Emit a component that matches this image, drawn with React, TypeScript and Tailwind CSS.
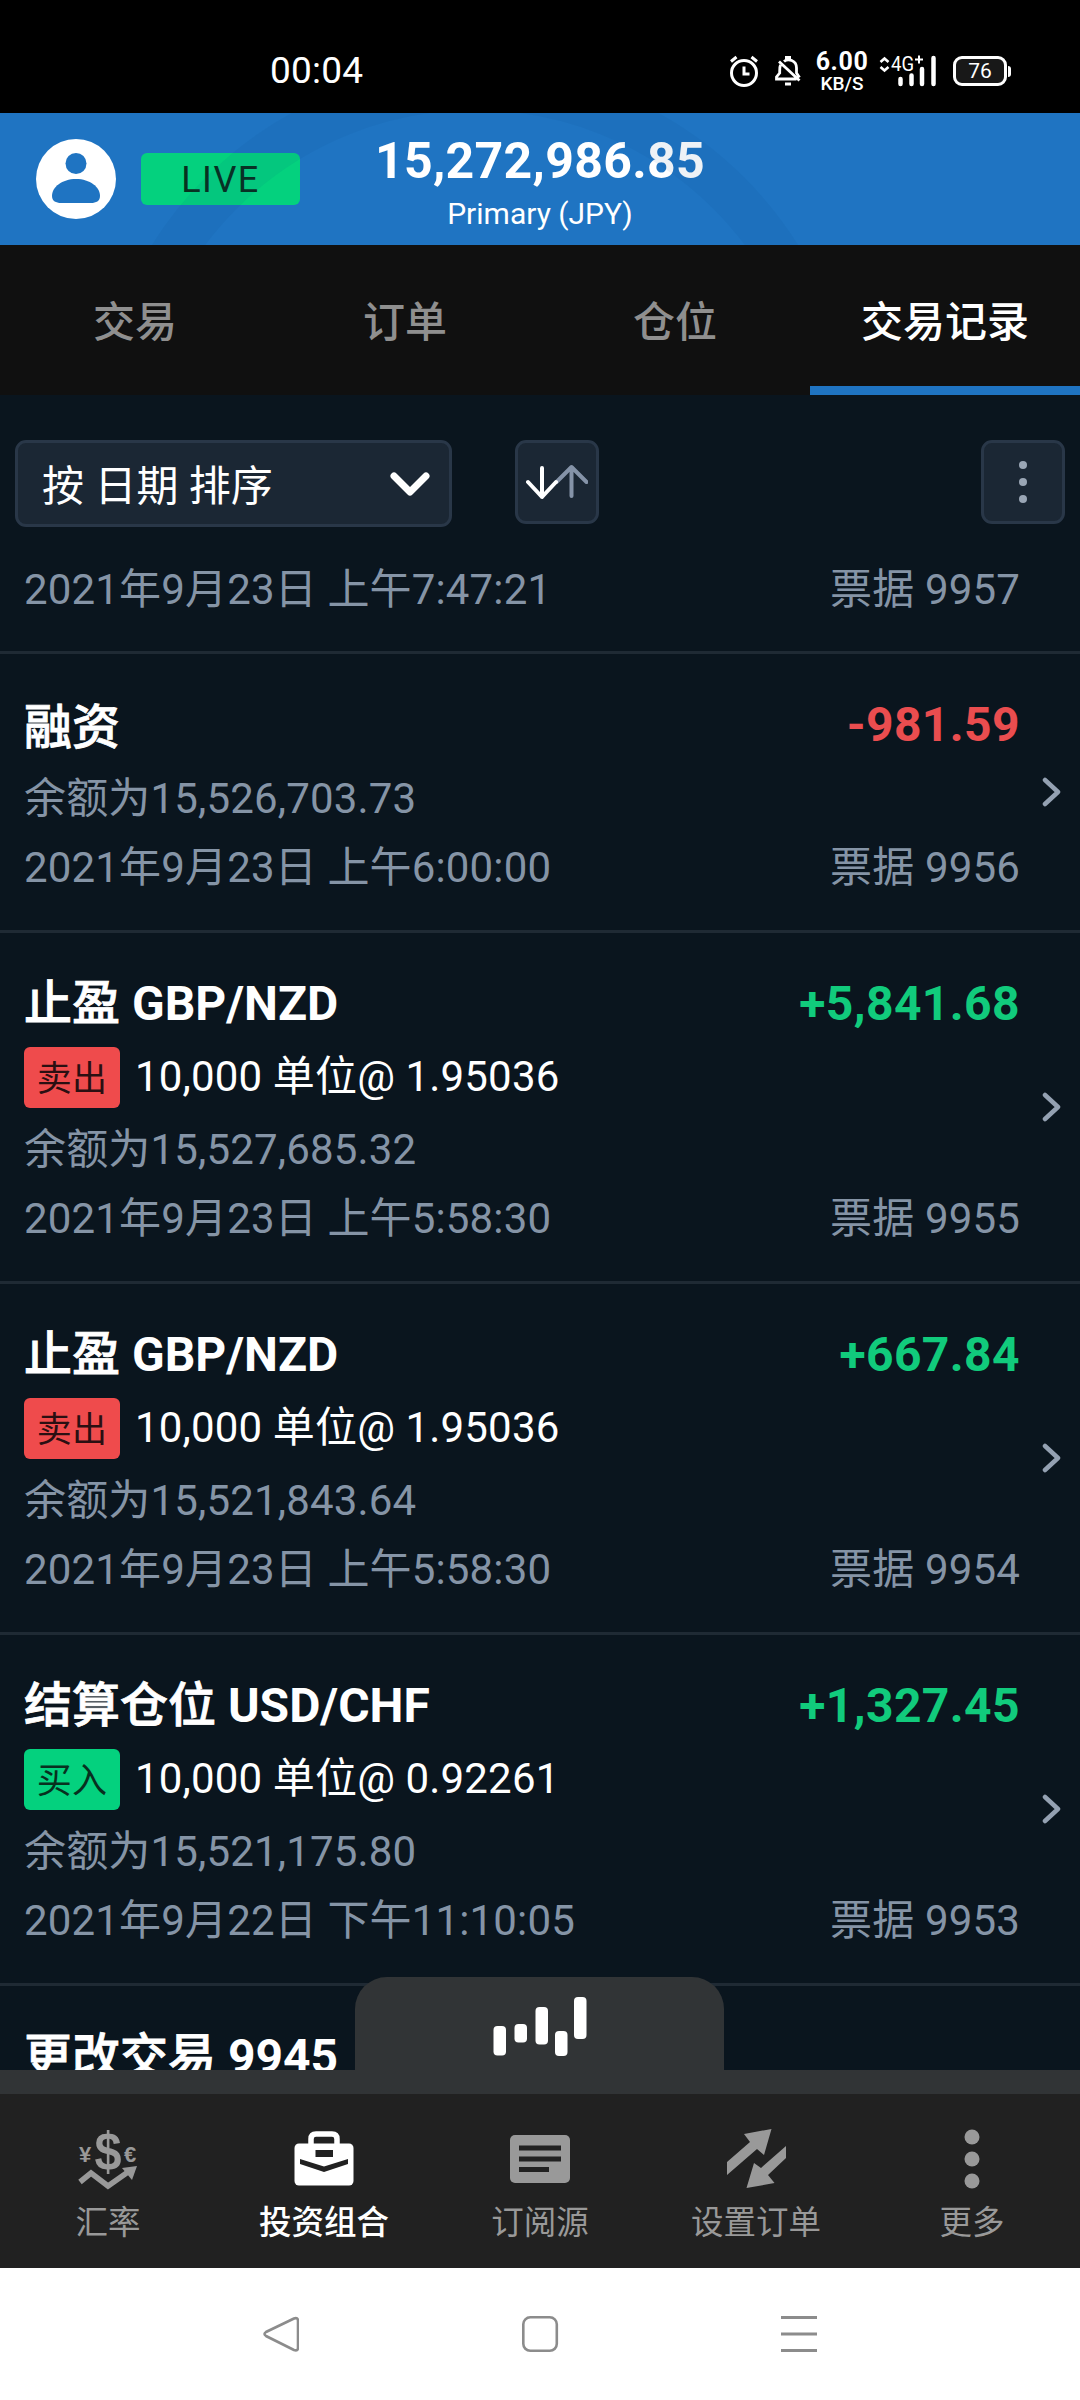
import type { ReactNode } from "react";

type Trade = {
  name: string;
  pair?: string;
  amount: string;
  side?: "buy" | "sell";
  detail?: string;
  balance: string;
  date: string;
  ticket: string;
};

const trades: Trade[] = [
  {
    name: "融资",
    amount: "-981.59",
    balance: "余额为15,526,703.73",
    date: "2021年9月23日 上午6:00:00",
    ticket: "票据 9956",
  },
  {
    name: "止盈",
    pair: "GBP/NZD",
    amount: "+5,841.68",
    side: "sell",
    detail: "10,000 单位@ 1.95036",
    balance: "余额为15,527,685.32",
    date: "2021年9月23日 上午5:58:30",
    ticket: "票据 9955",
  },
  {
    name: "止盈",
    pair: "GBP/NZD",
    amount: "+667.84",
    side: "sell",
    detail: "10,000 单位@ 1.95036",
    balance: "余额为15,521,843.64",
    date: "2021年9月23日 上午5:58:30",
    ticket: "票据 9954",
  },
  {
    name: "结算仓位",
    pair: "USD/CHF",
    amount: "+1,327.45",
    side: "buy",
    detail: "10,000 单位@ 0.92261",
    balance: "余额为15,521,175.80",
    date: "2021年9月22日 下午11:10:05",
    ticket: "票据 9953",
  },
];

const StatusBar = () => (
  <div className="h-[113px] shrink-0 bg-black text-white flex items-start pl-[270px] pr-[69px]">
    <div className="pt-[49px] text-[37px] leading-[44px] tracking-[0.2px]">00:04</div>
    <div className="ml-auto flex items-start pt-[52px]">
      <svg className="w-[30px] h-[36px]" viewBox="0 0 30 36" fill="none" stroke="white" strokeWidth="3">
        <circle cx="15" cy="21" r="12.5" />
        <path d="M15 14.5V22h5.5M2 9.5l5.5-4.5M28 9.5L22.500 5" />
      </svg>
      <svg className="ml-[16px] w-[26px] h-[36px]" viewBox="0 0 26 36" fill="none" stroke="white" strokeWidth="2.8">
        <path d="M9 9.500C13 6 21.500 8 21.500 16v5l3 4.500M5.500 13c-1 2-.8 4-.8 8L1.500 25v2h20M4 9.500l20.500 19" />
        <path d="M10 5.500h6M10 32h6" />
      </svg>
      <div className="ml-[11px] w-[60px] flex flex-col items-center font-medium">
        <span className="text-[25px] leading-[20px] tracking-[0.6px] font-bold">6.00</span>
        <span className="pt-[2px] text-[19px] leading-[20px]">KB/S</span>
      </div>
      <svg className="ml-[7px] w-[58px] h-[36px]" viewBox="0 0 58 36" fill="none" stroke="white" strokeWidth="2.6">
        <path d="M1.500 10l4-3.500 4 3.500M1.500 15l4 3.500 4-3.500" />
        <path d="M36 7.500h8M40 3.500v8" strokeWidth="2" />
        <text x="12" y="19" fill="white" stroke="none" className="font-['Roboto'] text-[20px]" textLength="23" lengthAdjust="spacingAndGlyphs">4G</text>
        <path d="M21.500 27v5M32.500 23.500v8.500M43 17v15M54.500 6v26" strokeWidth="4.500" strokeLinecap="round" />
      </svg>
      <div className="ml-[16px] mt-[4px] flex items-center">
        <div className="w-[54px] h-[30px] rounded-[9px] border-[3px] border-white bg-[#181818] flex items-center justify-center text-[21px] leading-none">
          76
        </div>
        <div className="w-[3px] h-[11px] ml-[1px] rounded-r bg-white" />
      </div>
    </div>
  </div>
);

const AccountHeader = () => (
  <header className="relative h-[132px] shrink-0 overflow-hidden bg-[#1f74c2] text-white">
    <div className="h-full grid grid-cols-[1fr_auto_1fr]">
      <div className="flex pl-[36px]">
        <svg className="mt-[26px] w-[80px] h-[80px]" viewBox="0 0 80 80">
          <circle cx="40" cy="40" r="40" fill="white" />
          <circle cx="40" cy="24.500" r="10.500" fill="#1f74c2" />
          <path d="M16 57c0-9 10-17 24-17s24 8 24 17c0 5-4 7-9 7H25c-5 0-9-2-9-7z" fill="#1f74c2" />
        </svg>
        <div className="ml-[25px] mt-[40px] w-[159px] h-[52px] rounded-[6px] bg-[#04d17e] text-[#08301f] text-[36px] leading-[55px] text-center tracking-[1.5px]">
          LIVE
        </div>
      </div>
      <div className="flex flex-col items-center">
        <div className="pt-[18px] text-[50px] leading-[60px] font-bold tracking-[0.3px]">15,272,986.85</div>
        <div className="text-[30px] leading-[46px]">Primary (JPY)</div>
      </div>
      <div />
    </div>
    <svg className="absolute inset-0 w-full h-full pointer-events-none" viewBox="0 0 1080 132">
      <circle cx="475" cy="334" r="359" fill="none" stroke="#0b4a80" strokeOpacity="0.07" strokeWidth="44" />
    </svg>
  </header>
);

const Tab = ({ children, active }: { children: ReactNode; active?: boolean }) => (
  <div
    className={
      active
        ? "flex-1 pt-[48px] text-center text-white border-b-[9px] border-[#1f74c2]"
        : "flex-1 pt-[48px] text-center text-[#8f8f8f]"
    }
  >
    {children}
  </div>
);

const Toolbar = () => (
  <div className="flex items-start pt-[45px] pl-[15px] pr-[15px] h-[132px]">
    <div className="w-[437px] h-[87px] rounded-[11px] border-[3px] border-[#293748] bg-[#1b2734] flex items-center pl-[24px] pr-[19px] text-white text-[42px] leading-[80px]">
      <span className="pt-[6px]">按 日期 排序</span>
      <svg className="ml-auto w-[40px] h-[26px]" viewBox="0 0 40 26" fill="none" stroke="white" strokeWidth="7" strokeLinecap="round" strokeLinejoin="round">
        <path d="M4 5l16 16L36 5" />
      </svg>
    </div>
    <div className="ml-[63px] w-[84px] h-[84px] rounded-[11px] border-[3px] border-[#293748] bg-[#1b2734] flex items-center justify-center">
      <svg className="w-[62px] h-[36px]" viewBox="0 0 62 36" fill="none" strokeWidth="4" strokeLinecap="round" strokeLinejoin="round">
        <path d="M45.500 32V3M30.500 18l15-15 15 15" stroke="#8593a8" />
        <path d="M16 4v29M2 18l14 15 14-15" stroke="white" />
      </svg>
    </div>
    <div className="ml-auto w-[84px] h-[84px] rounded-[11px] border-[3px] border-[#293748] bg-[#1b2734] flex flex-col items-center justify-center gap-[9px]">
      <span className="size-2 rounded-full bg-[#9aa6b5]" />
      <span className="size-2 rounded-full bg-[#9aa6b5]" />
      <span className="size-2 rounded-full bg-[#9aa6b5]" />
    </div>
  </div>
);

const TradeRow = ({ trade }: { trade: Trade }) => (
  <div
    className={
      trade.side
        ? "h-[351px] shrink-0 flex border-b-[3px] border-[#1f2a34]"
        : "h-[279px] shrink-0 flex border-b-[3px] border-[#1f2a34]"
    }
  >
    <div className="flex-1 pl-[24px] pt-[34px] text-[42px] text-[#8594a6] tracking-[0.16px]">
      <div className="h-[74px] leading-[74px] flex justify-between text-[48px] font-bold">
        {trade.pair ? (
          <span className="text-white tracking-normal">
            <span className="font-medium [-webkit-text-stroke:0.8px_white]">{trade.name}</span> {trade.pair}
          </span>
        ) : (
          <span className="pt-[3px] text-white font-medium tracking-normal [-webkit-text-stroke:0.8px_white]">
            {trade.name}
          </span>
        )}
        <span
          className={
            trade.amount.startsWith("-")
              ? "text-[#ea4d4f] tracking-[0.4px]"
              : "text-[#11cb7c] tracking-[0.4px]"
          }
        >
          {trade.amount}
        </span>
      </div>
      {trade.side && (
        <div className="h-[72px] flex items-center text-white">
          <span
            className={
              trade.side === "sell"
                ? "w-[96px] h-[61px] rounded-[6px] bg-[#ef4b4c] text-[#2b0f12] text-[35px] leading-[65px] text-center"
                : "w-[96px] h-[61px] rounded-[6px] bg-[#04d17e] text-[#08301f] text-[35px] leading-[65px] text-center"
            }
          >
            {trade.side === "sell" ? "卖出" : "买入"}
          </span>
          <span className="ml-[15px] leading-[72px]">{trade.detail}</span>
        </div>
      )}
      <div className="h-[74px] leading-[74px]">{trade.balance}</div>
      <div className="h-[64px] leading-[64px] flex justify-between">
        <span>{trade.date}</span>
        <span>{trade.ticket}</span>
      </div>
    </div>
    <div className="w-[60px] flex items-center pl-[22px]">
      <svg className="w-[20px] h-[30px]" viewBox="0 0 20 30" fill="none" stroke="#94a1b2" strokeWidth="4.500" strokeLinecap="round" strokeLinejoin="round">
        <path d="M3 3l13 12L3 27" />
      </svg>
    </div>
  </div>
);

const NavItem = ({ icon, label, active }: { icon: ReactNode; label: string; active?: boolean }) => (
  <div
    className={
      active
        ? "flex-1 flex flex-col items-center pt-[34px] text-white font-medium"
        : "flex-1 flex flex-col items-center pt-[34px] text-[#999999]"
    }
  >
    {icon}
    <span className="pt-[9px] text-[32.500px] leading-[48px]">{label}</span>
  </div>
);

const BottomNav = () => (
  <nav className="h-[174px] shrink-0 bg-[#212121] flex">
    <NavItem
      label="汇率"
      icon={
        <svg className="w-[60px] h-[62px] overflow-visible" viewBox="0 0 60 62" fill="currentColor">
          <text x="30" y="42" textAnchor="middle" className="font-['Liberation_Sans'] text-[53px] font-bold" textLength="27" lengthAdjust="spacingAndGlyphs">$</text>
          <text x="7" y="34" textAnchor="middle" className="font-['Liberation_Sans'] text-[22px] font-bold">¥</text>
          <text x="52" y="34" textAnchor="middle" className="font-['Liberation_Sans'] text-[22px] font-bold">€</text>
          <path d="M2 54l11-9 17 13 20-14" fill="none" stroke="currentColor" strokeWidth="5.500" />
          <path d="M44 40l15-2-5 14z" />
        </svg>
      }
    />
    <NavItem
      active
      label="投资组合"
      icon={
        <svg className="w-[60px] h-[62px]" viewBox="0 0 60 62" fill="currentColor">
          <path d="M17 17V11q0-5 5-5h16q5 0 5 5v6" fill="none" stroke="currentColor" strokeWidth="5.500" />
          <rect x="0.500" y="15.500" width="59" height="42" rx="4.500" />
          <rect x="21.500" y="22" width="17.500" height="7" fill="#212121" />
          <path d="M6 31l24 7.500L54 31v5L30 44 6 36z" fill="#212121" />
        </svg>
      }
    />
    <NavItem
      label="订阅源"
      icon={
        <svg className="w-[60px] h-[62px]" viewBox="0 0 60 62" fill="currentColor">
          <rect y="7" width="60" height="48" rx="5" />
          <path d="M9 20h42M9 31h42M9 41.500h30" fill="none" stroke="#212121" strokeWidth="5" />
        </svg>
      }
    />
    <NavItem
      label="设置订单"
      icon={
        <svg className="w-[60px] h-[62px]" viewBox="0 0 60 62" fill="currentColor">
          <path d="M45.500 1L38 27l-7-6L1 47V34l23-20-6-8z" />
          <path d="M20.500 60l7.500-25 7 5 25-22v12L42 47l6.500 8z" />
        </svg>
      }
    />
    <NavItem
      label="更多"
      icon={
        <svg className="w-[60px] h-[62px]" viewBox="0 0 60 62" fill="currentColor">
          <circle cx="30" cy="9" r="7.500" />
          <circle cx="30" cy="31" r="7.500" />
          <circle cx="30" cy="53" r="7.500" />
        </svg>
      }
    />
  </nav>
);

const SystemNav = () => (
  <div className="h-[132px] shrink-0 bg-white flex justify-center pt-[46px] gap-[222px]">
    <svg className="w-[36px] h-[40px]" viewBox="0 0 36 40" fill="none" stroke="#8c8c8c" strokeWidth="2.600">
      <path d="M31 4.500L3 18q-3 2 0 4l28 14q4 1.500 4-2.500V7q0-4-4-2.500z" />
    </svg>
    <svg className="w-[38px] h-[40px]" viewBox="0 0 38 40" fill="none" stroke="#8c8c8c" strokeWidth="2.600">
      <rect x="2.300" y="3.300" width="33.500" height="33.500" rx="7" />
    </svg>
    <svg className="w-[36px] h-[40px]" viewBox="0 0 36 40" fill="none" stroke="#8c8c8c" strokeWidth="3">
      <path d="M0 3.500h36M0 20h36M0 36.500h36" />
    </svg>
  </div>
);

export default function App() {
  return (
    <div className="w-[1080px] h-[2400px] flex flex-col overflow-hidden bg-[#0a151e] font-['Roboto','Noto_Sans_CJK_SC',sans-serif]">
      <StatusBar />
      <AccountHeader />
      <div className="h-[150px] shrink-0 flex bg-[#101010] text-[42px] leading-[60px] font-medium">
        <Tab>交易</Tab>
        <Tab>订单</Tab>
        <Tab>仓位</Tab>
        <Tab active>交易记录</Tab>
      </div>

      <main className="relative h-[1675px] shrink-0 flex flex-col">
        <Toolbar />
        <div className="h-[127px] shrink-0 border-b-[3px] border-[#1f2a34] pt-[31px] pl-[24px] pr-[60px] flex justify-between text-[42px] leading-[64px] text-[#8594a6] tracking-[0.16px]">
          <span>2021年9月23日 上午7:47:21</span>
          <span>票据 9957</span>
        </div>
        {trades.map((trade) => (
          <TradeRow key={trade.ticket} trade={trade} />
        ))}
        <div className="h-[84px] overflow-hidden pl-[24px] pt-[34px] text-[48px] leading-[74px] font-bold text-white">
          <span className="font-medium [-webkit-text-stroke:0.8px_white]">更改交易</span> 9945
        </div>

        {/* drawer handle floating over the list */}
        <div className="absolute bottom-0 left-[355px] w-[369px] h-[93px] rounded-t-[32px] bg-[#313436] flex justify-center pt-[20px]">
          <svg className="w-[94px] h-[60px]" viewBox="0 0 94 60" fill="white">
            <rect x="0.500" y="29" width="12.500" height="29.500" rx="4" />
            <rect x="21.500" y="27" width="12.500" height="18.500" rx="4" />
            <rect x="42.500" y="10" width="12.500" height="37.500" rx="4" />
            <rect x="62" y="34" width="12.500" height="25" rx="4" />
            <rect x="81" y="0" width="12.500" height="42" rx="4" />
          </svg>
        </div>
      </main>

      <div className="h-[24px] shrink-0 bg-[#313436]" />
      <BottomNav />
      <SystemNav />
    </div>
  );
}
